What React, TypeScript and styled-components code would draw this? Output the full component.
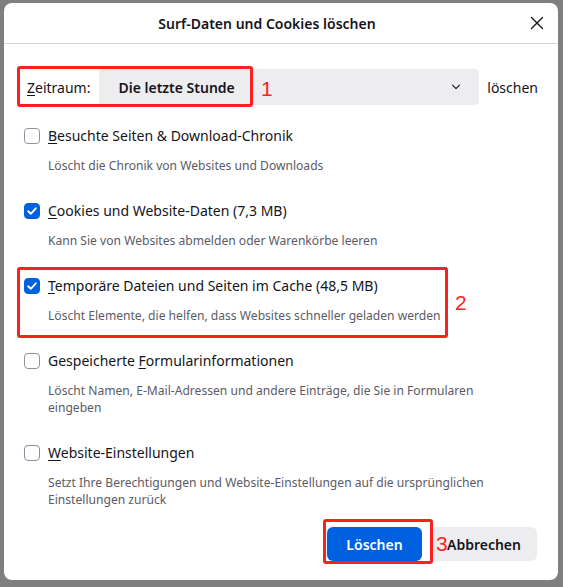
import React from 'react';
import styled, { createGlobalStyle } from 'styled-components';

const GlobalStyle = createGlobalStyle`
  html, body {
    margin: 0;
    padding: 0;
    background: #7f7f7f;
  }
  body {
    font-family: "Segoe UI", "Noto Sans", sans-serif;
    color: #15141a;
  }
`;

const Page = styled.div`
  position: relative;
  width: 563px;
  height: 587px;
  box-sizing: border-box;
  padding: 3px 5px 7px 4px;
`;

const Dialog = styled.div`
  height: 100%;
  background: #fff;
  border-radius: 8px;
  display: flex;
  flex-direction: column;
`;

const Header = styled.div`
  height: 40px;
  display: flex;
  align-items: center;
  border-bottom: 1px solid #d6d6d6;
`;

const Title = styled.div`
  flex: 1;
  text-align: center;
  padding-left: 14px;
  font-size: 14px;
  font-weight: 600;
`;

const CloseButton = styled.button`
  width: 42px;
  height: 40px;
  border: none;
  background: none;
  padding: 0;
  display: flex;
  align-items: center;
  justify-content: center;
  color: #15141a;
`;

const Body = styled.div`
  flex: 1;
  padding: 25px 20px 0 20px;
  display: flex;
  flex-direction: column;
`;

const RangeRow = styled.div`
  display: flex;
  align-items: center;
  height: 36px;
  padding-left: 3px;
  font-size: 14px;
`;

const RangeLabel = styled.span`
  margin-right: 9px;
`;

const Select = styled.div`
  flex: 1;
  height: 36px;
  border-radius: 4px;
  background: #ededf0;
  display: flex;
  align-items: center;
  justify-content: space-between;
  padding: 0 18px 0 19px;
  font-weight: 600;
  margin-right: 8px;
`;

const Items = styled.div`
  margin-top: 21px;
  display: flex;
  flex-direction: column;
  gap: 27px;
`;

const Item = styled.div`
  display: flex;
  flex-direction: column;
`;

const ItemHead = styled.label`
  display: flex;
  align-items: center;
  gap: 8px;
  font-size: 14px;
  line-height: 20px;
`;

const Box = styled.span<{ $checked?: boolean }>`
  width: 16px;
  height: 16px;
  box-sizing: border-box;
  border-radius: 4px;
  border: 1px solid ${(p) => (p.$checked ? '#0061e0' : '#8f8f9d')};
  background: ${(p) => (p.$checked ? '#0061e0' : '#fff')};
  display: flex;
  align-items: center;
  justify-content: center;
  flex-shrink: 0;
`;

const Desc = styled.div`
  margin-top: 11px;
  padding-left: 24px;
  font-size: 12.1px;
  line-height: 17px;
  color: #5b5b66;
`;

const Footer = styled.div`
  display: flex;
  justify-content: flex-end;
  gap: 9px;
  padding: 0 21px 19px 0;
`;

const Button = styled.button<{ $primary?: boolean }>`
  height: 34px;
  border: none;
  border-radius: 6px;
  padding: 0 16px;
  font-family: inherit;
  font-size: 14px;
  font-weight: 600;
  background: ${(p) => (p.$primary ? '#0061e0' : '#ededf0')};
  color: ${(p) => (p.$primary ? '#fff' : '#15141a')};
  min-width: ${(p) => (p.$primary ? '95px' : '104px')};
`;

const Mark = styled.div<{ $x: number; $y: number; $w: number; $h: number }>`
  position: absolute;
  left: ${(p) => p.$x}px;
  top: ${(p) => p.$y}px;
  width: ${(p) => p.$w}px;
  height: ${(p) => p.$h}px;
  box-sizing: border-box;
  border: 3px solid #fe1f1f;
  border-radius: 3px;
  pointer-events: none;
`;

const Num = styled.div<{ $x: number; $y: number }>`
  position: absolute;
  left: ${(p) => p.$x}px;
  top: ${(p) => p.$y}px;
  font-family: "Liberation Sans", Arial, sans-serif;
  font-size: 21px;
  line-height: 21px;
  color: #fe1f1f;
`;

const Key = styled.u`
  text-underline-offset: 2px;
`;

const Check = () => (
  <svg width="12" height="12" viewBox="0 0 12 12">
    <path d="M2.2 6.3 L4.8 8.8 L9.8 3.3" fill="none" stroke="#fff" strokeWidth="1.9" strokeLinecap="round" strokeLinejoin="round" />
  </svg>
);

type Entry = { head: React.ReactNode; desc: React.ReactNode; checked?: boolean };

const entries: Entry[] = [
  {
    head: <><Key>B</Key>esuchte Seiten &amp; Download-Chronik</>,
    desc: 'Löscht die Chronik von Websites und Downloads',
  },
  {
    head: <><Key>C</Key>ookies und Website-Daten (7,3 MB)</>,
    desc: 'Kann Sie von Websites abmelden oder Warenkörbe leeren',
    checked: true,
  },
  {
    head: <><Key>T</Key>emporäre Dateien und Seiten im Cache (48,5 MB)</>,
    desc: 'Löscht Elemente, die helfen, dass Websites schneller geladen werden',
    checked: true,
  },
  {
    head: <>Gespeicherte <Key>F</Key>ormularinformationen</>,
    desc: <>Löscht Namen, E-Mail-Adressen und andere Einträge, die Sie in Formularen<br />eingeben</>,
  },
  {
    head: <><Key>W</Key>ebsite-Einstellungen</>,
    desc: <>Setzt Ihre Berechtigungen und Website-Einstellungen auf die ursprünglichen<br />Einstellungen zurück</>,
  },
];

export default function App() {
  return (
    <>
      <GlobalStyle />
      <Page>
        <Dialog>
          <Header>
            <Title>Surf-Daten und Cookies löschen</Title>
            <CloseButton aria-label="Schließen">
              <svg width="14" height="14" viewBox="0 0 14 14">
                <path d="M1.5 1.5 L12.5 12.5 M12.5 1.5 L1.5 12.5" stroke="#15141a" strokeWidth="1.4" strokeLinecap="round" />
              </svg>
            </CloseButton>
          </Header>
          <Body>
            <RangeRow>
              <RangeLabel><Key>Z</Key>eitraum:</RangeLabel>
              <Select>
                <span>Die letzte Stunde</span>
                <svg width="10" height="6" viewBox="0 0 10 6">
                  <path d="M1.5 1.2 L5 4.6 L8.5 1.2" fill="none" stroke="#15141a" strokeWidth="1.1" strokeLinecap="round" strokeLinejoin="round" />
                </svg>
              </Select>
              <span>löschen</span>
            </RangeRow>
            <Items>
              {entries.map((e, i) => (
                <Item key={i}>
                  <ItemHead>
                    <Box $checked={e.checked}>{e.checked && <Check />}</Box>
                    <span>{e.head}</span>
                  </ItemHead>
                  <Desc>{e.desc}</Desc>
                </Item>
              ))}
            </Items>
          </Body>
          <Footer>
            <Button $primary>Löschen</Button>
            <Button>Abbrechen</Button>
          </Footer>
        </Dialog>
        <Mark $x={17} $y={66} $w={236} $h={41} />
        <Num $x={261} $y={78}>1</Num>
        <Mark $x={17} $y={267} $w={431} $h={71} />
        <Num $x={455} $y={292}>2</Num>
        <Mark $x={323} $y={519} $w={110} $h={45} />
        <Num $x={436} $y={533}>3</Num>
      </Page>
    </>
  );
}
